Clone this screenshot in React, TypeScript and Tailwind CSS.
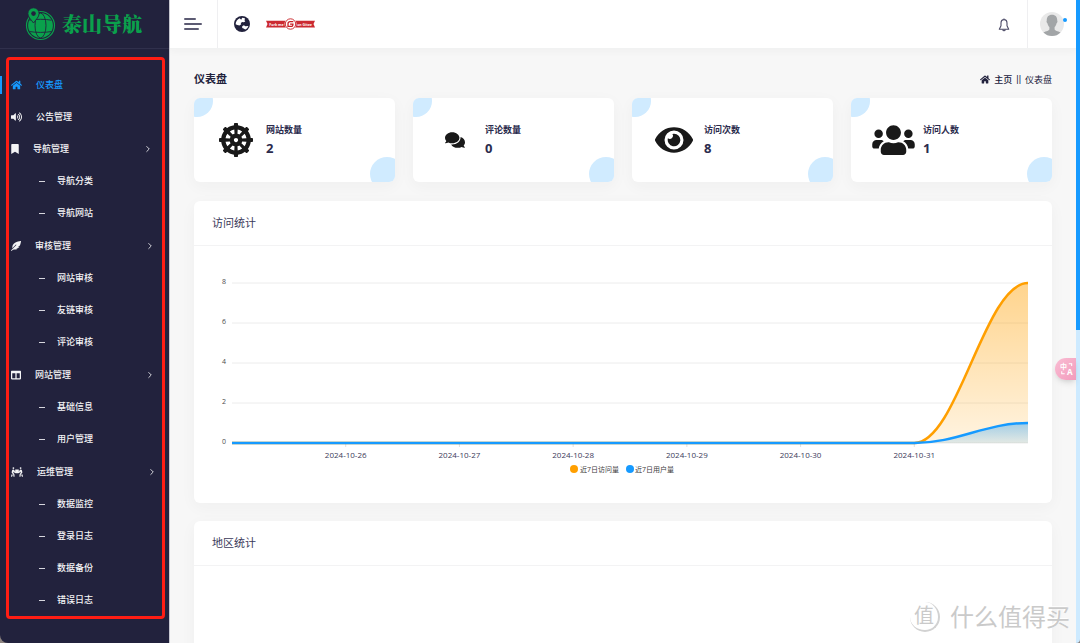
import React from 'react';
import {
  FaHome,
  FaVolumeUp,
  FaBookmark,
  FaFeatherAlt,
  FaColumns,
  FaPeopleCarry,
  FaDharmachakra,
  FaComments,
  FaEye,
  FaUsers,
} from 'react-icons/fa';
import { FiChevronRight } from 'react-icons/fi';

const MENU = [
  { label: '仪表盘', icon: FaHome, width: 'w-[11px]', active: true },
  { label: '公告管理', icon: FaVolumeUp, width: 'w-[11px]' },
  { label: '导航管理', icon: FaBookmark, width: 'w-2', children: ['导航分类', '导航网站'] },
  { label: '审核管理', icon: FaFeatherAlt, width: 'w-2.5', children: ['网站审核', '友链审核', '评论审核'] },
  { label: '网站管理', icon: FaColumns, width: 'w-2.5', children: ['基础信息', '用户管理'] },
  { label: '运维管理', icon: FaPeopleCarry, width: 'w-3', children: ['数据监控', '登录日志', '数据备份', '错误日志'] },
];

const STATS = [
  { label: '网站数量', value: 2, icon: FaDharmachakra, size: 'h-[34px] w-[34px]' },
  { label: '评论数量', value: 0, icon: FaComments, size: 'h-[18px] w-5' },
  { label: '访问次数', value: 8, icon: FaEye, size: 'h-[34px] w-[38px]' },
  { label: '访问人数', value: 1, icon: FaUsers, size: 'h-[34px] w-[43px]' },
];

const DAYS = ['2024-10-26', '2024-10-27', '2024-10-28', '2024-10-29', '2024-10-30', '2024-10-31'];
const VISITS = [0, 0, 0, 0, 0, 0, 0, 8];
const USERS = [0, 0, 0, 0, 0, 0, 0, 1];

const CHART = { left: 38, right: 834, top: 37, bottom: 197, max: 8 };
const STEP = (CHART.right - CHART.left) / (VISITS.length - 1);

const xAt = (i: number) => CHART.left + i * STEP;
const yAt = (v: number) => CHART.bottom - (v / CHART.max) * (CHART.bottom - CHART.top);

function smoothLine(values: number[]) {
  return values
    .map((v, i) => {
      if (i === 0) return `M${xAt(0)} ${yAt(v)}`;
      const bend = STEP * 0.38;
      return `C${xAt(i - 1) + bend} ${yAt(values[i - 1])} ${xAt(i) - bend} ${yAt(v)} ${xAt(i)} ${yAt(v)}`;
    })
    .join(' ');
}

function smoothArea(values: number[]) {
  return `${smoothLine(values)} L${CHART.right} ${CHART.bottom} L${CHART.left} ${CHART.bottom} Z`;
}

function Logo() {
  return (
    <a href="#" className="flex h-12 items-center justify-center gap-1.5 text-[#0aa14c]">
      <svg viewBox="0 0 31 34" className="h-[34px] w-[31px]" fill="none" aria-hidden="true">
        <circle cx="15.500" cy="18.500" r="14" stroke="currentColor" strokeWidth="1.200" />
        <circle cx="15.500" cy="18.500" r="12.400" fill="currentColor" />
        <g stroke="#22223d" strokeWidth="0.900">
          <ellipse cx="15.500" cy="18.500" rx="5.500" ry="12.400" />
          <path d="M4.500 13.200c6-1.200 16-1.200 22 0M4.500 24.500c6 1.200 16 1.200 22 0" />
        </g>
        <path
          d="M8.500.8a5.600 5.600 0 0 1 5.600 5.800c0 3.400-3 5.700-5.600 9.400-2.600-3.700-5.600-6-5.600-9.400A5.600 5.600 0 0 1 8.500.8Z"
          fill="currentColor"
          stroke="#22223d"
          strokeWidth="0.900"
        />
        <circle cx="8.500" cy="6.600" r="2.300" fill="#22223d" />
      </svg>
      <span className="font-['Noto_Serif_CJK_SC','Noto_Sans_CJK_SC',serif] text-[20px] leading-6 font-black">
        泰山导航
      </span>
    </a>
  );
}

function Sidebar() {
  return (
    <aside className="w-[170px] shrink-0 overflow-hidden rounded-bl-lg border-r border-[#c9c9d2] bg-[#22223d] text-[#f4f4f6]">
      <div className="border-b border-[#30304c] pr-0.5">
        <Logo />
      </div>
      <nav className="relative mt-5">
        <ul className="text-[9px] leading-4 font-medium">
          {MENU.map((item) => (
            <li key={item.label}>
              <a
                href="#"
                className={`relative flex h-8 items-center gap-3.5 pl-[11px] ${item.active ? 'text-[#169aff]' : ''}`}
              >
                {item.active && <span className="absolute top-[7px] left-0 h-[18px] w-0.5 bg-[#169aff]" />}
                <item.icon className={`h-2.5 shrink-0 ${item.width}`} preserveAspectRatio="xMidYMid meet" />
                <span className="w-24 shrink-0">{item.label}</span>
                {item.children && <FiChevronRight className="size-2.5 shrink-0" />}
              </a>
              {item.children && (
                <ul className="pb-px">
                  {item.children.map((child) => (
                    <li key={child}>
                      <a href="#" className="flex h-8 items-center gap-3 pl-[39px]">
                        <span className="h-px w-1.5 bg-[#d6d6de]" />
                        {child}
                      </a>
                    </li>
                  ))}
                </ul>
              )}
            </li>
          ))}
        </ul>
        <div className="pointer-events-none absolute -top-3 right-1 -bottom-0.5 left-1.5 rounded border-[3px] border-[#ff1d14]" />
      </nav>
    </aside>
  );
}

function Earth() {
  return (
    <svg viewBox="0 0 16 16" className="size-4" aria-hidden="true">
      <circle cx="8" cy="8" r="8" fill="#22223d" />
      <path
        d="M1.600 8.200C1.800 5.600 3.400 3.300 5.700 2.300l1.500 1.400 1-1.900c1.100 0 2 .2 2.900.6l-.6 1.900.8 1.300-1.700.6-1.200-.3-1.700 1 .5 1.400-1.700 1.100-2.200-.5Z"
        fill="#fff"
      />
      <path d="M8.200 10.200l1.700-.9 1.500.9 3-.2c-.6 1.700-1.700 2.900-3.200 3.600l-1.600-1-1.400-.6Z" fill="#fff" />
    </svg>
  );
}

function GiteeRibbon() {
  return (
    <svg viewBox="0 0 49 12" className="h-3 w-[49px]" aria-label="Fork me on Gitee">
      <path d="M0 2.800h49l-1.500 3.200 1.500 3.500H0L1.500 6Z" fill="#cb2a31" />
      <circle cx="24.500" cy="6" r="6" fill="#fff" />
      <circle cx="24.500" cy="6" r="5.200" fill="none" stroke="#c71d23" strokeWidth="0.900" />
      <path
        d="M27.300 3.700h-3.300a2 2 0 0 0-2 2v2.700h3.300a1.600 1.600 0 0 0 1.600-1.600V6.200h-2.800"
        fill="none"
        stroke="#c71d23"
        strokeWidth="1.300"
      />
      <g fill="#fff" fontSize="3.500" fontWeight="700" textAnchor="middle">
        <text x="10.500" y="7.500">Fork me</text>
        <text x="38.500" y="7.500">on Gitee</text>
      </g>
    </svg>
  );
}

function Header() {
  return (
    <header className="flex h-[49px] shrink-0 items-stretch border-b border-[#f1f2f2] bg-white shadow-[0_2px_8px_rgba(40,60,60,0.04)]">
      <button type="button" aria-label="菜单" className="flex w-12 flex-col justify-center gap-[3px] border-r border-[#efeff1] pl-3.5">
        <span className="h-0.5 w-3 rounded-full bg-[#5c5b73]" />
        <span className="h-0.5 w-[18px] rounded-full bg-[#5c5b73]" />
        <span className="h-0.5 w-[15px] rounded-full bg-[#5c5b73]" />
      </button>
      <div className="flex flex-1 items-center gap-4 pl-4">
        <a href="#" aria-label="前台">
          <Earth />
        </a>
        <a href="#">
          <GiteeRibbon />
        </a>
      </div>
      <button type="button" aria-label="通知" className="flex w-12 items-center justify-center border-r border-[#efeff1] pt-0.5">
        <svg viewBox="0 0 12 14" className="h-3.5 w-3" fill="none" stroke="#4b4a66" strokeWidth="1.100" strokeLinejoin="round">
          <path d="M6 1.600c-2 0-3 1.500-3 3.600v2.600L1.300 11.200h9.400L9 7.800V5.200c0-2.100-1-3.600-3-3.600ZM6 .4v1.200" />
          <path d="M4.800 11.400c0 1.800 2.400 1.800 2.400 0" />
        </svg>
      </button>
      <button type="button" aria-label="用户" className="relative flex w-12 items-center pl-3">
        <svg viewBox="0 0 24 24" className="size-6">
          <defs>
            <clipPath id="avatar">
              <circle cx="12" cy="12" r="12" />
            </clipPath>
          </defs>
          <g clipPath="url(#avatar)">
            <rect width="24" height="24" fill="#e9e9e9" />
            <path
              d="M12 2.800c-3.600 0-5.400 2.300-5.200 5.700-.6.300-.2 2.400.6 2.700.4 1.900 1.200 3 2 3.900v2.400C8.600 19.400 4.500 19 3.200 21v3h17.600v-3c-1.300-2-5.400-1.600-6.200-3.500v-2.400c.8-.9 1.600-2 2-3.900.8-.3 1.200-2.400.6-2.700.2-3.400-1.600-5.700-5.200-5.700Z"
              fill="#a2a5a7"
            />
          </g>
        </svg>
        <span className="absolute top-[18px] right-[9px] size-1 rounded-full bg-[#169aff]" />
      </button>
    </header>
  );
}

function StatCard({ stat }: { stat: (typeof STATS)[number] }) {
  return (
    <div className="rounded-md bg-white shadow-[0_4px_16px_rgba(40,60,60,0.04)]">
      <div className="relative flex h-[84px] items-center overflow-hidden rounded-md px-3">
        <span className="absolute -top-[13px] -left-[13px] size-8 rounded-full bg-[#d0ebff]" />
        <span className="absolute -right-[9px] -bottom-[9px] size-[34px] rounded-full bg-[#d0ebff]" />
        <div className="flex w-[60px] justify-center text-[#191919]">
          <stat.icon className={`shrink-0 ${stat.size}`} />
        </div>
        <div className="text-[#2b2b4d]">
          <p className="text-[9px] leading-4 font-bold">{stat.label}</p>
          <p className="text-[13px] leading-5 font-bold">{stat.value}</p>
        </div>
      </div>
    </div>
  );
}

function Panel({ title, children }: { title: string; children?: React.ReactNode }) {
  return (
    <section className="mb-[18px] rounded-md bg-white shadow-[0_4px_16px_rgba(40,60,60,0.04)]">
      <h2 className="flex h-[45px] items-center border-b border-[#f3f3f4] px-[18px] text-[11px] text-[#3b3a5a]">{title}</h2>
      {children}
    </section>
  );
}

function VisitChart() {
  return (
    <svg viewBox="0 0 858 257" className="block h-auto w-full">
      <defs>
        <linearGradient id="visits" x1="0" y1="0" x2="0" y2="1">
          <stop offset="0" stopColor="#ff9f00" stopOpacity="0.450" />
          <stop offset="1" stopColor="#ff9f00" stopOpacity="0.120" />
        </linearGradient>
        <linearGradient id="users" x1="0" y1="0" x2="0" y2="1">
          <stop offset="0" stopColor="#169aff" stopOpacity="0.400" />
          <stop offset="1" stopColor="#169aff" stopOpacity="0.120" />
        </linearGradient>
      </defs>

      {[8, 6, 4, 2, 0].map((v) => (
        <g key={v}>
          <line x1={CHART.left} x2={CHART.right} y1={yAt(v)} y2={yAt(v)} stroke="#ececec" />
          <text x="32" y={yAt(v) + 1} textAnchor="end" fontSize="7" fill="#4b4b4b">
            {v}
          </text>
        </g>
      ))}

      {DAYS.map((day, i) => (
        <g key={day}>
          <line x1={xAt(i + 1)} x2={xAt(i + 1)} y1={CHART.bottom} y2={CHART.bottom + 4} stroke="#e0e0e0" />
          <text x={xAt(i + 1)} y="212" textAnchor="middle" fontSize="8" fill="#3b3a5a">
            {day}
          </text>
        </g>
      ))}

      <path d={smoothArea(VISITS)} fill="url(#visits)" />
      <path d={smoothArea(USERS)} fill="url(#users)" />
      <path d={smoothLine(VISITS)} fill="none" stroke="#ff9f00" strokeWidth="2.500" />
      <path d={smoothLine(USERS)} fill="none" stroke="#169aff" strokeWidth="2.500" />

      <g fontSize="7" fill="#3c3c3c">
        <circle cx="380" cy="223" r="4" fill="#ff9f00" />
        <text x="386" y="226">近7日访问量</text>
        <circle cx="436" cy="223" r="4" fill="#169aff" />
        <text x="441" y="226">近7日用户量</text>
      </g>
    </svg>
  );
}

function TranslateButton() {
  return (
    <button
      type="button"
      aria-label="翻译"
      className="absolute top-[358px] right-1 flex h-[22px] w-[21px] items-center justify-center rounded-l-full bg-linear-to-br from-[#f9bdd3] to-[#f29bbd] shadow-md shadow-black/10"
    >
      <svg viewBox="0 0 12 12" className="ml-0.5 size-3.5" fill="#fff">
        <text x="0" y="6" fontSize="6" fontWeight="700">中</text>
        <text x="6" y="11" fontSize="7" fontWeight="700">A</text>
        <path d="M7.500 1.500h2.500v2M1.500 8v2h2.500" fill="none" stroke="#fff" strokeWidth="0.900" />
      </svg>
    </button>
  );
}

function Watermark() {
  return (
    <div className="pointer-events-none absolute right-2.5 bottom-2.5 flex items-center gap-2.5 text-[#cacaca] [text-shadow:-1px_-1px_0_#fff]">
      <span className="flex size-[30px] items-center justify-center rounded-full border-r-2 border-b-2 border-[#d2d2d2] text-[20px]">
        值
      </span>
      <span className="text-[24px] leading-8">什么值得买</span>
    </div>
  );
}

export default function App() {
  return (
    <div className="relative flex h-screen overflow-hidden bg-[#8d8480] font-['Open_Sans','Noto_Sans_CJK_SC',sans-serif]">
      <Sidebar />
      <div className="flex min-w-0 flex-1 flex-col bg-[#f7f7f7]">
        <Header />
        <main className="min-h-0 flex-1 overflow-y-auto px-6 [scrollbar-width:none]">
          <div className="flex h-[49px] items-center justify-between pt-3 text-[#22223d]">
            <h1 className="text-[11px] font-bold">仪表盘</h1>
            <div className="flex items-center text-[9px]">
              <FaHome className="mr-1 h-[9px] w-2.5" />
              <a href="#" className="font-medium">主页</a>
              <span className="mx-1 font-['Liberation_Sans',sans-serif]">||</span>
              <span>仪表盘</span>
            </div>
          </div>
          <div className="mb-[19px] grid grid-cols-4 gap-[18px]">
            {STATS.map((stat) => (
              <StatCard key={stat.label} stat={stat} />
            ))}
          </div>
          <Panel title="访问统计">
            <VisitChart />
          </Panel>
          <Panel title="地区统计">
            <div className="h-64" />
          </Panel>
        </main>
      </div>
      <div className="w-1 shrink-0 rounded-br bg-[#cdeaff]">
        <div className="h-[330px] bg-[#169aff]" />
      </div>
      <TranslateButton />
      <Watermark />
    </div>
  );
}
